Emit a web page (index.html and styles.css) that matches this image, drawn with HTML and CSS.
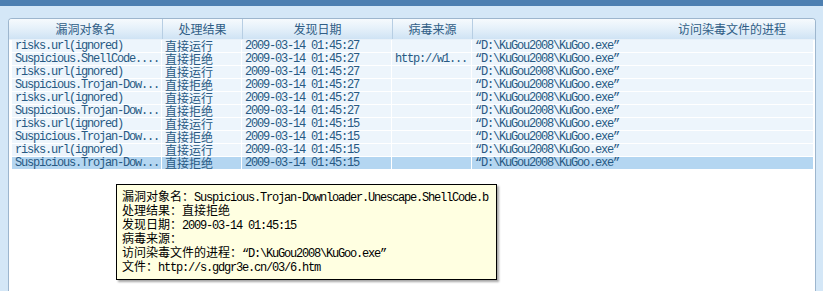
FILE: index.html
```html
<!DOCTYPE html>
<html lang="zh-CN">
<head>
<meta charset="utf-8">
<title>漏洞记录</title>
<link rel="stylesheet" href="styles.css">
</head>
<body>
<div class="topbar"></div>
<div class="panel">
  <div class="head">
    <div class="hc">漏洞对象名</div>
    <div class="hc">处理结果</div>
    <div class="hc">发现日期</div>
    <div class="hc">病毒来源</div>
    <div class="hc last">访问染毒文件的进程</div>
  </div>
  <div class="rows">
    <div class="row"><div class="c m">risks.url(ignored)</div><div class="c">直接运行</div><div class="c m">2009-03-14 01:45:27</div><div class="c m"></div><div class="c m">“D:\KuGou2008\KuGoo.exe”</div></div>
    <div class="row"><div class="c m">Suspicious.ShellCode....</div><div class="c">直接拒绝</div><div class="c m">2009-03-14 01:45:27</div><div class="c m">http://w1...</div><div class="c m">“D:\KuGou2008\KuGoo.exe”</div></div>
    <div class="row"><div class="c m">risks.url(ignored)</div><div class="c">直接运行</div><div class="c m">2009-03-14 01:45:27</div><div class="c m"></div><div class="c m">“D:\KuGou2008\KuGoo.exe”</div></div>
    <div class="row"><div class="c m">Suspicious.Trojan-Dow...</div><div class="c">直接拒绝</div><div class="c m">2009-03-14 01:45:27</div><div class="c m"></div><div class="c m">“D:\KuGou2008\KuGoo.exe”</div></div>
    <div class="row"><div class="c m">risks.url(ignored)</div><div class="c">直接运行</div><div class="c m">2009-03-14 01:45:27</div><div class="c m"></div><div class="c m">“D:\KuGou2008\KuGoo.exe”</div></div>
    <div class="row"><div class="c m">Suspicious.Trojan-Dow...</div><div class="c">直接拒绝</div><div class="c m">2009-03-14 01:45:27</div><div class="c m"></div><div class="c m">“D:\KuGou2008\KuGoo.exe”</div></div>
    <div class="row"><div class="c m">risks.url(ignored)</div><div class="c">直接运行</div><div class="c m">2009-03-14 01:45:15</div><div class="c m"></div><div class="c m">“D:\KuGou2008\KuGoo.exe”</div></div>
    <div class="row"><div class="c m">Suspicious.Trojan-Dow...</div><div class="c">直接拒绝</div><div class="c m">2009-03-14 01:45:15</div><div class="c m"></div><div class="c m">“D:\KuGou2008\KuGoo.exe”</div></div>
    <div class="row"><div class="c m">risks.url(ignored)</div><div class="c">直接运行</div><div class="c m">2009-03-14 01:45:15</div><div class="c m"></div><div class="c m">“D:\KuGou2008\KuGoo.exe”</div></div>
    <div class="row sel"><div class="c m">Suspicious.Trojan-Dow...</div><div class="c">直接拒绝</div><div class="c m">2009-03-14 01:45:15</div><div class="c m"></div><div class="c m">“D:\KuGou2008\KuGoo.exe”</div></div>
  </div>
</div>
<div class="tip">
  <div class="tl"><span class="lb">漏洞对象名：</span><span class="m">Suspicious.Trojan-Downloader.Unescape.ShellCode.b</span></div>
  <div class="tl"><span class="lb">处理结果：</span><span class="lb">直接拒绝</span></div>
  <div class="tl"><span class="lb">发现日期：</span><span class="m">2009-03-14 01:45:15</span></div>
  <div class="tl"><span class="lb">病毒来源：</span></div>
  <div class="tl"><span class="lb">访问染毒文件的进程：</span><span class="m">“D:\KuGou2008\KuGoo.exe”</span></div>
  <div class="tl"><span class="lb">文件：</span><span class="m">http://s.gdgr3e.cn/03/6.htm</span></div>
</div>
</body>
</html>
```
FILE: styles.css
```css
html, body {
  margin: 0;
  padding: 0;
}
body {
  width: 823px;
  height: 291px;
  overflow: hidden;
  background: #d4e7f7;
  font-family: "Noto Sans CJK SC", "Liberation Sans", sans-serif;
  font-size: 12px;
  position: relative;
}
.topbar {
  height: 6px;
  background: #4d7fb1;
}
.panel {
  margin: 12px 7px 0 8px;
  height: 273px;
  box-sizing: border-box;
  border: 1px solid #9db6ce;
  border-bottom: none;
  border-radius: 4px 4px 0 0;
  background: #ffffff;
  overflow: hidden;
}
.head {
  display: grid;
  grid-template-columns: 154px 80px 150px 80px 1fr;
  height: 20px;
  background: linear-gradient(#f6fafd, #e6f1fa 45%, #cfe3f4);
  border-bottom: 1px solid #e8f1f9;
}
.hc {
  box-sizing: border-box;
  border-right: 1px solid #b7cee3;
  text-align: center;
  line-height: 20px;
  color: #2f5d86;
  font-size: 12px;
}
.hc.last {
  border-right: none;
  text-align: right;
  padding-right: 29px;
}
.rows {
  margin: 0 2px 0 3px;
}
.row {
  display: grid;
  grid-template-columns: 150px 80px 150px 80px 1fr;
  height: 13px;
  background: #edf5fc;
  box-shadow: inset 0 -1px 0 #ffffff;
}
.row.sel {
  background: #b4d6f1;
}
.c {
  box-sizing: border-box;
  border-right: 1px solid #ffffff;
  padding-left: 3px;
  height: 13px;
  line-height: 12px;
  color: #275983;
  white-space: nowrap;
  font-size: 12px;
}
.c:last-child {
  border-right: none;
}
.m {
  font-family: "Liberation Mono", "Noto Sans CJK SC", monospace;
  font-size: 12px;
  letter-spacing: -1.2px;
}
.tip {
  position: absolute;
  left: 116px;
  top: 184px;
  width: 381px;
  height: 96px;
  box-sizing: border-box;
  border: 1px solid #000000;
  background: #ffffe1;
  box-shadow: 2px 2px 2px rgba(0, 0, 0, 0.35);
  padding: 4px 0 0 5px;
  color: #000000;
}
.tl {
  height: 14px;
  line-height: 14px;
  white-space: nowrap;
}
.lb {
  font-size: 12px;
}
.tip .m {
  font-size: 12px;
}
```
